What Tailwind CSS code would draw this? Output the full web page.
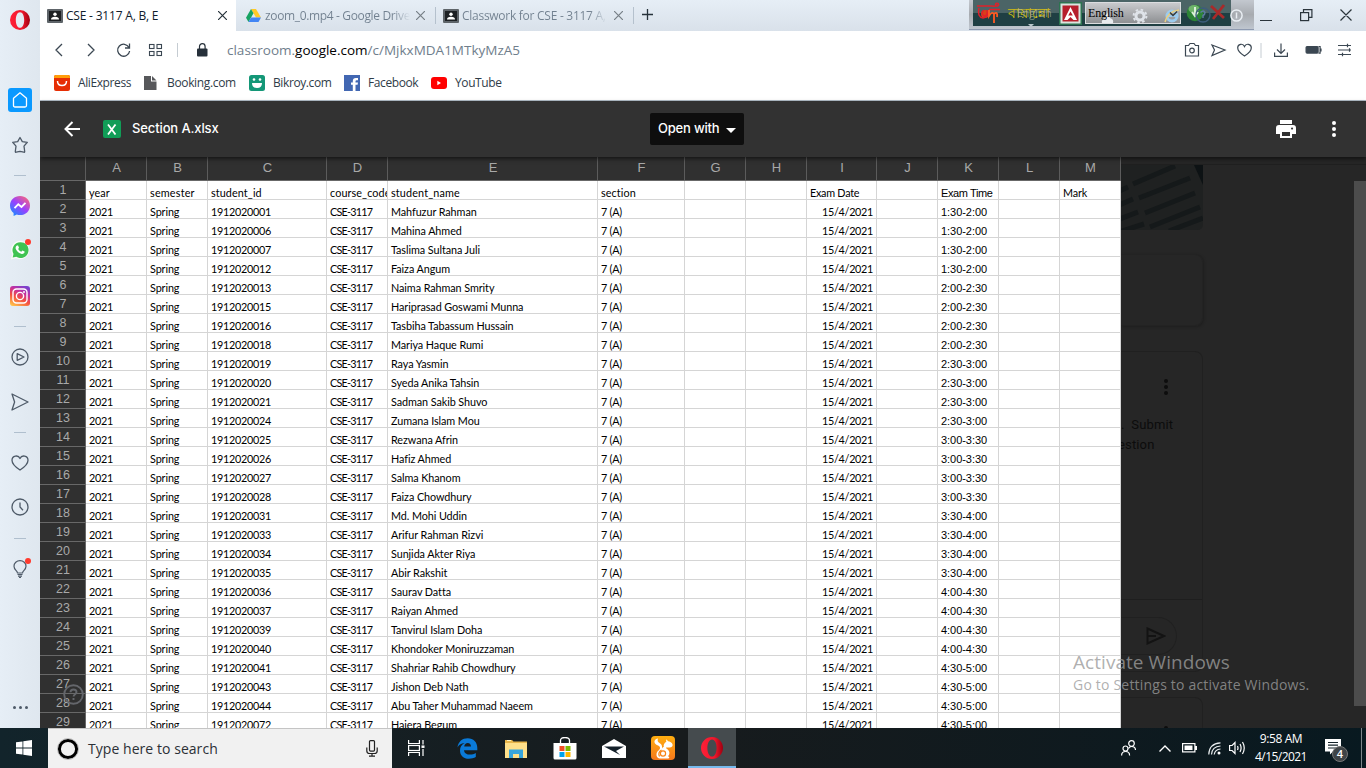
<!DOCTYPE html>
<html lang="en">
<head>
<meta charset="utf-8">
<title>Section A.xlsx</title>
<script src="https://cdn.jsdelivr.net/npm/@tailwindcss/browser@4"></script>
</head>
<body class="w-[1366px] h-[768px] overflow-hidden flex flex-col font-['Open_Sans',sans-serif] bg-white relative">

<div class="flex h-[728px] w-full">
  <!-- Opera sidebar -->
  <aside class="w-10 h-full bg-gradient-to-r from-[#e6eef6] to-[#dfe7ef] flex flex-col items-center shrink-0">
    <svg class="mt-[10px]" width="20" height="20" viewBox="0 0 20 20"><defs><linearGradient id="op" x1="0" x2="1"><stop offset="0" stop-color="#ff2038"/><stop offset=".6" stop-color="#f0182c"/><stop offset="1" stop-color="#9e0010"/></linearGradient></defs><path fill="url(#op)" fill-rule="evenodd" d="M10 0a10 10 0 1 0 0 20 10 10 0 0 0 0-20zm0 2.200c2.600 0 4.200 3.500 4.200 7.800s-1.600 7.800-4.200 7.800S5.800 14.300 5.800 10 7.400 2.200 10 2.200z"/></svg>
    <div class="mt-[58px] size-6 rounded-[3px] bg-[#0a99ff] flex items-center justify-center"><svg width="16" height="18" viewBox="0 0 16 18" fill="none" stroke="#fff" stroke-width="1.300" stroke-linejoin="round"><path d="M1.500 7.200 8 1.800l6.500 5.400v7.300q0 1.500-1.500 1.500H3q-1.500 0-1.500-1.500z"/></svg></div>
    <svg class="mt-[24px]" width="18" height="18" viewBox="0 0 18 18" fill="none" stroke="#4e5a68" stroke-width="1.300" stroke-linejoin="round"><path d="M9 1.500l2.300 4.100 5 .7-3.300 3.800.7 5.400q0 .9-.9.700L9 15.300l-3.800.9q-.9.200-.9-.7l.7-5.400L1.700 6.300l5-.7z"/></svg>
    <div class="mt-[21px] w-3 h-px bg-[#b0bfce]"></div>
    <svg class="mt-[20px]" width="20" height="20" viewBox="0 0 20 20"><defs><linearGradient id="ms" x1="0.100" y1="1" x2=".9" y2="0"><stop offset="0" stop-color="#1090ff"/><stop offset=".5" stop-color="#9a40ff"/><stop offset="1" stop-color="#ff6a70"/></linearGradient></defs><path fill="url(#ms)" d="M10 0C4.400 0 0 4 0 9.500 0 13 1.700 15.500 3.600 17v3l3.200-1.400q1.500.5 3.200.5c5.600 0 10-4 10-9.600S15.600 0 10 0z"/><path fill="none" stroke="#fff" stroke-width="1.900" d="M4.500 12.200 8.300 8.200l3.200 2.700 4-4"/></svg>
    <div class="mt-[24px] h-[20px] relative"><svg width="20" height="20" viewBox="0 0 20 20"><path fill="#f7fbf8" d="M10.200.8a9.200 9.200 0 0 0-8 13.600L.8 19.600l5.300-1.300A9.200 9.200 0 1 0 10.200.8z"/><path fill="#3fc352" d="M10.200 2.200A7.900 7.900 0 0 0 3.500 14l-.8 3.600 3.600-.9a7.900 7.900 0 1 0 3.900-14.500z"/><path fill="#fff" d="M7 5.500l1.100.1.900 2.200-.8 1.100c.8 1.400 1.700 2.200 3.100 2.800l1.100-1.100 2.200 1-.1 1c-.6 1.300-2 1.600-3.300 1.200-2.800-.8-4.700-2.900-5.500-5-.4-1.300.3-2.800 1.300-3.300z"/></svg><i class="absolute -top-[1px] left-[15px] w-[6px] h-[6px] rounded-full bg-[#ff3a2d]"></i></div>
    <svg class="mt-[26px]" width="20" height="20" viewBox="0 0 20 20"><defs><linearGradient id="ig" x1="0.200" y1="1" x2=".7" y2="0"><stop offset="0" stop-color="#ffc04a"/><stop offset=".4" stop-color="#f4503f"/><stop offset=".7" stop-color="#c7309e"/><stop offset="1" stop-color="#7a42cd"/></linearGradient></defs><rect width="20" height="20" rx="3" fill="url(#ig)"/><g fill="none" stroke="#fff" stroke-width="1.400"><rect x="3" y="3" width="14" height="14" rx="3.500"/><circle cx="10" cy="10" r="3.600"/></g><circle cx="14" cy="6" r="1" fill="#fff"/></svg>
    <div class="mt-[20px] w-3 h-px bg-[#b0bfce]"></div>
    <svg class="mt-[21px] mr-px" width="18" height="18" viewBox="0 0 18 18" fill="none" stroke="#4e5a68" stroke-width="1.300" stroke-linejoin="round"><circle cx="9" cy="9" r="8"/><path d="M6.200 5.700 13 9l-6.800 3.300z"/></svg>
    <svg class="mt-[27px] mr-px" width="18" height="18" viewBox="0 0 18 18" fill="none" stroke="#4e5a68" stroke-width="1.300" stroke-linejoin="round"><path d="M1 1l16 8-16 8 2.600-8z"/></svg>
    <div class="mt-[21px] w-3 h-px bg-[#b0bfce]"></div>
    <svg class="mt-[22px] mr-px" width="18" height="16" viewBox="0 0 18 16" fill="none" stroke="#4e5a68" stroke-width="1.300" stroke-linejoin="round"><path d="M9 15C5 12.500 1 9.500 1 5.300 1 .5 7.300-.5 9 3.500 10.700-.5 17 .5 17 5.300c0 4.200-4 7.200-8 9.700z"/></svg>
    <svg class="mt-[27px] mr-px" width="18" height="18" viewBox="0 0 18 18" fill="none" stroke="#4e5a68" stroke-width="1.300"><circle cx="9" cy="9" r="8"/><path d="M9 4.500V9l3 3.200"/></svg>
    <div class="mt-[22px] w-3 h-px bg-[#b0bfce]"></div>
    <div class="mt-[21px] h-[20px] relative"><svg width="14" height="18" viewBox="0 0 14 18" fill="none" stroke="#4e5a68" stroke-width="1.200"><path d="M4.500 13C4.300 10.500 1 9.800 1 6.200a6 5.600 0 0 1 12 0c0 3.600-3.300 4.300-3.500 6.800zM4.500 14.500h5M5 16.200h4M6 17.600h2"/></svg><i class="absolute -top-[2px] left-[12px] w-[6px] h-[6px] rounded-full bg-[#ff3a2d]"></i></div>
    <div class="mt-[126px] flex gap-[3px]"><i class="w-[3px] h-[3px] rounded-full bg-[#4e5a68]"></i><i class="w-[3px] h-[3px] rounded-full bg-[#4e5a68]"></i><i class="w-[3px] h-[3px] rounded-full bg-[#4e5a68]"></i></div>
  </aside>

  <main class="flex-1 flex flex-col min-w-0 overflow-hidden">
    <!-- Tab strip -->
    <div class="h-[31px] shrink-0 flex bg-gradient-to-b from-[#e6eef6] to-[#d9e1ea] text-[12px] text-[#71808f] relative">
      <div class="w-[196px] bg-white flex items-center pl-[7px] pr-[9px] text-[#10202c]">
        <svg width="16" height="14" viewBox="0 0 16 14"><rect width="16" height="14" rx="1" fill="#5e6469"/><rect x="2" y="2" width="12" height="10" fill="#1d2023"/><circle cx="8" cy="5.300" r="1.700" fill="#fff"/><path fill="#fff" d="M4 10.500q0-2.800 4-2.800t4 2.800z"/></svg>
        <span class="ml-[3px] whitespace-nowrap tracking-[-0.2px]">CSE - 3117 A, B, E</span>
        <svg class="ml-auto" width="9" height="9" viewBox="0 0 9 9" stroke="#26323a" stroke-width="1.200"><path d="M0 0l9 9M9 0L0 9"/></svg>
      </div>
      <div class="w-[200px] flex items-center pl-[10px] pr-[10px] border-r border-[#b5c1cd] my-[7px]">
        <svg width="15" height="13" viewBox="0 0 15 13"><path fill="#ffc928" d="M5 0h5l5 8.500h-5z"/><path fill="#16a362" d="M5 0 0 8.800 2.500 13l5-8.700z"/><path fill="#4285f4" d="M5 8.500h10L12.500 13h-10z"/></svg>
        <span class="ml-[4px] w-[145px] overflow-hidden whitespace-nowrap tracking-[-0.35px] bg-linear-to-r from-[#71808f] from-88% to-transparent bg-clip-text text-transparent">zoom_0.mp4 - Google Drive</span>
        <svg class="ml-auto" width="9" height="9" viewBox="0 0 9 9" stroke="#777f86" stroke-width="1.200"><path d="M0 0l9 9M9 0L0 9"/></svg>
      </div>
      <div class="w-[198px] flex items-center pl-[7px] pr-[10px] border-r border-[#b5c1cd] my-[7px]">
        <svg width="16" height="14" viewBox="0 0 16 14"><rect width="16" height="14" rx="1" fill="#5e6469"/><rect x="2" y="2" width="12" height="10" fill="#1d2023"/><circle cx="8" cy="5.300" r="1.700" fill="#fff"/><path fill="#fff" d="M4 10.500q0-2.800 4-2.800t4 2.800z"/></svg>
        <span class="ml-[3px] w-[145px] overflow-hidden whitespace-nowrap tracking-[-0.27px] bg-linear-to-r from-[#71808f] from-88% to-transparent bg-clip-text text-transparent">Classwork for CSE - 3117 A,</span>
        <svg class="ml-auto" width="9" height="9" viewBox="0 0 9 9" stroke="#777f86" stroke-width="1.200"><path d="M0 0l9 9M9 0L0 9"/></svg>
      </div>
      <svg class="mt-[9px] ml-[8px]" width="11" height="11" viewBox="0 0 11 11" stroke="#26323a" stroke-width="1.300"><path d="M0 5.500h11M5.500 0v11"/></svg>

      <!-- Bijoy keyboard bar over the tab strip -->
      <div class="absolute left-[929px] top-0 w-[285px] h-[30px] bg-gradient-to-b from-[#c3c8cf] via-[#a7abb0] to-[#bfc6cf] border-b border-[#8e9ab0]"></div>
      <div class="absolute left-[933px] top-0 w-[258px] h-[26px] bg-gradient-to-b from-[#4b6466] from-50% to-[#1f3f43] to-50% flex items-center">
        <svg class="ml-[3px] shrink-0" width="28" height="24" viewBox="0 0 28 24" fill="none"><circle cx="9" cy="13" r="4" fill="#d8401a"/><g stroke="#e0202a" stroke-width="1.500"><path d="M1 5h15M3 7q-2 9 4 10 5-1 5-6M8 9q-4 3 0 6 4 0 3-6M16 5q4 1 7-1M21 2.200a1.500 1.500 0 1 0 .1 0"/><path d="M13 8.500h11" stroke-width="1.500"/></g><path d="M13 9v6q3-5 5-2v9M18 13q4-3 3 3" stroke="#ff5a22" stroke-width="1.800"/></svg>
        <span class="ml-[4px] w-[43px] text-[14px] leading-[22px] text-[#d2bd10] font-medium whitespace-nowrap">বায়ান্নো</span>
        <svg class="ml-[8px] shrink-0" width="23" height="23" viewBox="0 0 23 23"><rect width="23" height="23" fill="#2d7350"/><rect x="1.500" y="1.500" width="20" height="20" fill="#d9e4df"/><rect x="3.500" y="3.500" width="16" height="16" fill="#b61e2c"/><path fill="#fff" d="M11.500 5l6.500 13h-3.500l-3-3-3 3H5zM11.500 9.500l-2.300 4h4.600z"/></svg>
        <div class="ml-[3px] w-[96px] h-[22px] shrink-0 bg-gradient-to-b from-[#c9cacd] to-[#8e9093] border border-[#dcdde0] flex items-start relative">
          <svg class="absolute left-[15px] top-[9px]" width="13" height="12" viewBox="0 0 13 12"><path fill="#e9ebee" d="M6 0l3 6q4 1 3 5H1q-1-3 3-5z"/></svg>
          <span class="ml-[2px] relative font-['Liberation_Serif',serif] text-[12px] leading-[20px] tracking-[-0.15px] text-black">English</span>
          <svg class="absolute left-[46px] top-[5px]" width="16" height="16" viewBox="0 0 16 16" fill="none" stroke="#dfe3e9"><circle cx="8" cy="8" r="4" stroke-width="3"/><circle cx="8" cy="8" r="6.400" stroke-width="2" stroke-dasharray="2.500 2.500"/></svg>
          <svg class="absolute left-[78px] top-[5px]" width="16" height="16" viewBox="0 0 16 16" fill="none"><circle cx="8" cy="8" r="5" stroke="#9ccbee" stroke-width="3"/><path d="M4 8h8" stroke="#9ccbee" stroke-width="2"/><path d="M1 14Q4 3 15 2" stroke="#e9cf80" stroke-width="1.500"/><path d="M6 4.500l3 3 4-4" stroke="#30373d" stroke-width="1.300"/></svg>
        </div>
        <svg class="ml-[5px] shrink-0" width="42" height="22" viewBox="0 0 42 22" fill="none"><circle cx="9" cy="11" r="8.300" fill="#2c8436"/><ellipse cx="8" cy="7" rx="5.500" ry="4" fill="#9bd48f" fill-opacity=".6"/><path d="M9 5v8M6 10l3 4 3-4" stroke="#d9f0d8" stroke-width="2"/><circle cx="17" cy="13" r="7" stroke="#3d5d7c" stroke-width="1.400"/><path d="M14.500 10.500q3-3 4.500 0 0 2-2 3v2.500" stroke="#5c7ca0" stroke-width="1.500"/><path d="M25 4l13 12M38 3 27 17" stroke="#a82a2a" stroke-width="2.800"/></svg>
      </div>
      <span class="absolute left-[977px] top-[6px] text-[10.5px] leading-[15px] text-[#aebba0]/70">English</span>
      <i class="absolute left-[988px] top-[24px] border-x-[3px] border-t-[3px] border-x-transparent border-t-[#b8c6cb]"></i>
      <svg class="absolute left-[1190px] top-[9px]" width="13" height="13" viewBox="0 0 13 13" fill="none" stroke="#e9eef3" stroke-width="1.500"><circle cx="6.500" cy="6.500" r="5.600"/><path d="M6.500 3.500v6"/></svg>
      <!-- window controls -->
      <svg class="absolute left-[1220px] top-[9px]" width="92" height="13" viewBox="0 0 92 13" fill="none" stroke="#2b353c" stroke-width="1.200"><path d="M0 11.500h12M80.500.5l11 11M91.500.5l-11 11M43.500 3.500V.6h8.400v7.800h-3"/><rect x="40.600" y="3.600" width="8" height="8"/></svg>
    </div>

    <!-- Address bar -->
    <div class="h-[38px] shrink-0 flex items-center bg-white">
      <svg class="ml-[14px]" width="135" height="16" viewBox="0 0 135 16" fill="none" stroke="#3b4752" stroke-width="1.300"><path d="M8 2 2 8l6 6M34 2l6 6-6 6M75 5.500A6 6 0 1 0 75.600 9M75.500 1.500v4.500h-4.500"/><g stroke-width="1.100"><rect x="95.500" y="2.500" width="4.500" height="4"/><rect x="103" y="2.500" width="4.500" height="4"/><rect x="95.500" y="9.500" width="4.500" height="4"/><rect x="103" y="9.500" width="4.500" height="4"/></g><path d="M123.500 1v14" stroke="#c5ccd2" stroke-width="1"/></svg>
      <svg class="ml-[8px]" width="11" height="14" viewBox="0 0 11 14"><rect y="5.500" width="10.500" height="8" rx="1" fill="#26303a"/><path d="M2.500 6V3.500a2.800 2.800 0 0 1 5.600 0V6" fill="none" stroke="#26303a" stroke-width="1.200"/></svg>
      <span class="ml-[19px] mt-px text-[13.5px] text-[#6f7e8c] whitespace-nowrap">classroom.<span class="text-black">google.com</span>/c/MjkxMDA1MTkyMzA5</span>
      <svg class="ml-auto mr-[14px]" width="168" height="16" viewBox="0 0 168 16" fill="none" stroke="#3b4752" stroke-width="1.200"><path d="M1.500 3.500h3l1.500-2h4l1.500 2h3v10.500h-13z"/><circle cx="8" cy="8.500" r="2.300"/><path d="M28 3l13 5-13 5.500L30.500 8zM60.500 14q-6.800-4-6.800-8.200c0-4 5.300-4.800 6.800-1.400 1.500-3.400 6.800-2.600 6.800 1.400 0 4.200-6.800 8.200-6.800 8.200z"/><path d="M77 1v15" stroke="#c5ccd2" stroke-width="1"/><path d="M97 1.500V11M93 7.500l4 4 4-4M90.600 10.500v3.900h12.800v-3.900"/><rect x="122.100" y="4.600" width="12" height="6.500" rx="1" fill="#3b4752"/><path d="M134.500 4.500h1.600v6.600h-1.600M137 6.500v3"/><path d="M154 3.500h13M154 8h13M154 12.500h13M163.500 1.800v3.400M165.500 6.300v3.400M158.500 10.800v3.400"/></svg>
    </div>

    <!-- Bookmarks -->
    <div class="h-[32px] pb-[3px] shrink-0 flex items-center bg-white border-b border-[#b4bfca] text-[12px] text-[#2f3c48] tracking-[-0.4px]">
      <svg class="ml-[14px]" width="16" height="16" viewBox="0 0 16 16"><rect width="16" height="16" rx="2" fill="#e62e04"/><path d="M0 3V2a2 2 0 0 1 2-2h12a2 2 0 0 1 2 2v1z" fill="#ff9d0a"/><path d="M3.500 6q0 4.500 4.500 4.500T12.500 6" fill="none" stroke="#fff" stroke-width="1.500"/></svg>
      <span class="ml-[8px] w-[66px]">AliExpress</span>
      <svg width="13" height="14" viewBox="0 0 13 14"><path fill="#57585b" d="M0 0h7v5.500h5.500V14H0z"/><path fill="#57585b" d="M8 0l4.500 4.500H8z"/></svg>
      <span class="ml-[10px] w-[82px] tracking-[-0.35px]">Booking.com</span>
      <svg width="16" height="16" viewBox="0 0 16 16"><rect width="16" height="16" rx="2.500" fill="#149777"/><path d="M3 8h10q0 5-5 5T3 8z" fill="#fff"/><circle cx="5" cy="4.500" r="1.300" fill="#fff"/><circle cx="11" cy="4.500" r="1.300" fill="#fff"/></svg>
      <span class="ml-[8px] w-[71px]">Bikroy.com</span>
      <svg width="16" height="16" viewBox="0 0 16 16"><rect width="16" height="16" fill="#4267b2"/><path fill="#fff" d="M8.800 16V9.800H7V7.500h1.800V6q0-3 3-3H14v2.300h-1.300q-1.200 0-1.200 1.200v1H14l-.4 2.300h-2.100V16z"/></svg>
      <span class="ml-[8px] w-[63px]">Facebook</span>
      <svg width="16" height="12" viewBox="0 0 16 12"><rect width="16" height="12" rx="3" fill="#f00"/><path d="M6.300 3.800 10 6l-3.700 2.200z" fill="#fff"/></svg>
      <span class="ml-[8px]">YouTube</span>
    </div>

    <!-- Viewer header -->
    <div class="h-[56px] shrink-0 bg-[#323232] flex items-center text-white font-['Inter',sans-serif] font-medium text-[13px] z-10 shadow-[0_2px_4px_rgba(0,0,0,.55)]">
      <svg class="ml-[24px]" width="16" height="16" viewBox="0 0 16 16" fill="none" stroke="#fff" stroke-width="2"><path d="M16 8H1.500M8.500 1l-7 7 7 7"/></svg>
      <div class="ml-[23px] size-[18px] rounded-[2px] bg-[#119d57] flex items-center justify-center"><svg width="10" height="11" viewBox="0 0 10 11" stroke="#fff" stroke-width="1.800"><path d="M1 .5l7.500 10M8.500.5 1 10.500"/></svg></div>
      <span class="ml-[11px] w-[518px] tracking-[-0.12px]">Section A.xlsx</span>
      <div class="w-[94px] h-8 rounded-[2px] bg-[#0e0e0e] flex items-center pl-[8px]"><span class="tracking-[-0.2px] whitespace-nowrap">Open with</span><i class="ml-auto mr-[8px] mt-[2px] border-x-[5px] border-t-[5px] border-x-transparent border-t-white"></i></div>
      <svg class="ml-auto" width="20" height="18" viewBox="0 0 20 18"><path fill="#fff" fill-rule="evenodd" d="M4 0h12v4H4zM3 5h14a3 3 0 0 1 3 3v6h-4v4H4v-4H0V8a3 3 0 0 1 3-3zm3 7v4h8v-4zM16 7.500a1 1 0 1 0 .1 0z"/></svg>
      <svg class="ml-[36px] mr-[30px]" width="4" height="16" viewBox="0 0 4 16" fill="#fff"><circle cx="2" cy="2" r="2"/><circle cx="2" cy="8" r="2"/><circle cx="2" cy="14" r="2"/></svg>
    </div>

    <div class="flex h-[571px] shrink-0 overflow-hidden bg-[#262626]">
      <!-- Sheet -->
      <div class="w-[1081px] shrink-0">
        <div id="head" class="h-6 grid grid-cols-[46px_61px_61px_119px_61px_210px_87px_61px_61px_70px_61px_61px_61px_61px] bg-[#303030] border-b border-[#686868] font-['Liberation_Sans',sans-serif] text-[13px] leading-[22px] text-[#a9a9a9] text-center"></div>
        <div id="rows" class="font-['Lato',sans-serif] text-[10.8px] text-black"></div>
      </div>
      <!-- Dimmed classroom page behind the viewer -->
      <div class="flex-1 relative flex flex-col overflow-hidden">
        <div class="h-[8px] shrink-0 border-b border-[#202020]"></div>
        <svg class="shrink-0" width="82" height="65" viewBox="0 0 82 65"><path fill="#1f2121" d="M0 0h82v59q0 6-6 6H0z"/><path fill="#0d1214" d="M73 0h9v20z"/><g stroke="#15191a" stroke-width="5"><path d="M12 19 54 1M18 33 69 13M24 48 74 28M29 62 79 42M48 66 82 53M-4 27 7 22M-4 41 12 34M-4 55 17 47M-2 67 23 59"/></g></svg>
        <div class="mt-[24px] w-[82px] h-[72px] shrink-0 rounded-r-lg border-r border-y border-[#232323] shadow-[1px_1px_3px_rgba(0,0,0,.22)]"></div>
        <div class="mt-[25px] w-[82px] h-[321px] shrink-0 rounded-r-lg border-r border-y border-[#202020] flex flex-col font-['Roboto',sans-serif] text-[13px] leading-[20px] text-[#0c0c0c] tracking-[0.15px]">
          <svg class="mt-[27px] ml-[43px] shrink-0" width="4" height="16" viewBox="0 0 4 16" fill="#0d0d0d"><circle cx="2" cy="2" r="2"/><circle cx="2" cy="8" r="2"/><circle cx="2" cy="14" r="2"/></svg>
          <div class="mt-[20px] whitespace-pre">.  Submit</div>
          <div class="-ml-[3px]">estion</div>
          <div class="mt-[144px] border-t border-[#1e1e1e]"></div>
          <div class="mt-[17px] w-[56px] h-[38px] rounded-r-full border-y border-r border-[#202020] flex items-center pl-[25px]"><svg width="20" height="18" viewBox="0 0 20 18" fill="none" stroke="#131313" stroke-width="2"><path d="M1.500 1.500 18 9 1.500 16.500V1.500zM2 9h8"/></svg></div>
        </div>
        <div class="mt-[25px] w-[82px] h-[60px] shrink-0 rounded-tr-lg border-r border-t border-[#202020]"><i class="block mt-[28px] ml-[43px] w-1 h-1 rounded-full bg-[#0d0d0d]"></i></div>
        <div class="absolute right-0 top-[24px] w-3 h-[525px] bg-[#4c4c4c]"></div>
      </div>
    </div>
  </main>
</div>

<!-- help button and activation watermark overlay the sheet -->
<svg class="absolute left-[63px] top-[684px]" width="21" height="21" viewBox="0 0 21 21" fill="none" stroke="#64666b" stroke-width="1.900"><circle cx="10.500" cy="10.500" r="9.300"/><path d="M7.500 8.300q0-2.800 3-2.800t3 2.600c0 2-2.900 2.200-2.900 4.400M10.500 14v2"/></svg>
<div class="absolute left-[1073px] top-[650px] text-[#9b9b9b]/80 whitespace-nowrap">
  <div class="text-[19px] leading-[25px] tracking-[0.05px]">Activate Windows</div>
  <div class="text-[14px] leading-[20px] tracking-[0.2px]">Go to Settings to activate Windows.</div>
</div>

<!-- Taskbar -->
<footer class="h-10 shrink-0 flex items-center bg-gradient-to-r from-[#12242b] via-[#171b1d] to-[#081920] text-white">
  <svg class="ml-4" width="16" height="16" viewBox="0 0 16 16" fill="#fff"><path d="M0 2.300 6.500 1.400V7.600H0zM7.300 1.300 16 0v7.600H7.300zM0 8.400h6.500v6.200L0 13.700zM7.300 8.400H16V16l-8.700-1.300z"/></svg>
  <div class="ml-4 w-[344px] h-10 bg-[#f1f1f1] border-t border-[#c4c4c4] flex items-center pl-[9px] pr-[14px] text-[14px] text-[#2c3036]">
    <svg width="22" height="22" viewBox="0 0 22 22" fill="none"><circle cx="11" cy="11" r="8.600" stroke="#000" stroke-width="3"/><circle cx="11" cy="11" r="10.500" stroke="#999" stroke-width=".6"/></svg>
    <span class="ml-[9px] whitespace-nowrap tracking-[0.05px]">Type here to search</span>
    <svg class="ml-auto" width="12" height="17" viewBox="0 0 12 17" fill="none" stroke="#222" stroke-width="1.200"><rect x="3.500" y=".6" width="5" height="10.500" rx="1"/><path d="M.8 7.500v3.200q0 2.800 2.800 2.800h4.800q2.800 0 2.800-2.800V7.500M6 13.500V16M3 16.200h6"/></svg>
  </div>
  <svg class="ml-[16px]" width="17" height="16" viewBox="0 0 17 16" fill="none" stroke="#fff" stroke-width="1.200"><path d="M.6 0v3.500h10.800V0M.6 16v-3.500h10.800V16M15 0v4.500M15 9v7"/><rect x=".6" y="5.500" width="10.800" height="5"/><path d="M13.500 6.700h3" stroke-width="2.500"/></svg>
  <svg class="ml-[32px]" width="21" height="21" viewBox="0 0 21 21"><path fill="#0a7ad8" d="M.5 9.500C1.300 3.500 5.400.3 10.700.3c5.800 0 9.600 4 9.600 9.500v2.400H7c.3 3 2.800 4.400 6 4.400 2.200 0 4.100-.6 5.800-1.700v4.200c-1.900 1.100-4.300 1.600-6.800 1.600-5.600 0-9-3.300-9-8.300 0-3.200 1.700-5.900 4.700-7.300-4 .3-6 2.300-7.200 4.400zM7.200 8.600H14c-.1-2.200-1.200-3.600-3.300-3.600-1.900 0-3.200 1.400-3.500 3.600z"/></svg>
  <svg class="ml-[27px]" width="22" height="19" viewBox="0 0 22 19"><path fill="#e8b54a" d="M0 1h7l1.500 1.500H22V19H0z"/><path fill="#ffe08a" d="M0 4h22v15H0z"/><path fill="#fff3c0" d="M2 1h4v1H2z"/><path fill="#37a5dc" d="M4 10.500h14V19h-4v-4H8v4H4z"/></svg>
  <svg class="ml-[26px]" width="24" height="23" viewBox="0 0 24 23"><path d="M7.500 7V3.500q0-3 4.500-3t4.500 3V7" fill="none" stroke="#fff" stroke-width="1.300"/><path fill="#fff" d="M.5 6h23v15q0 1.500-1.500 1.500H2Q.5 22.500.5 21z"/><path fill="#f04e24" d="M6.500 9h5v5h-5z"/><path fill="#7fb900" d="M12.500 9h5v5h-5z"/><path fill="#00a3ee" d="M6.500 15h5v5h-5z"/><path fill="#ffb800" d="M12.500 15h5v5h-5z"/></svg>
  <svg class="ml-[25px]" width="24" height="19" viewBox="0 0 24 19"><path fill="#fff" d="M0 7 12 0l12 7v12H0z"/><path fill="#14202a" d="M2 7.500h20L14 12l4 4z"/></svg>
  <svg class="ml-[25px]" width="24" height="24" viewBox="0 0 24 24"><defs><linearGradient id="uc" x2="0" y2="1"><stop stop-color="#ffae10"/><stop offset="1" stop-color="#f6781c"/></linearGradient></defs><rect width="24" height="24" rx="4" fill="url(#uc)"/><path fill="#fff" d="M7 2.500C3.500 3 2.500 6 4.500 8c1.500 1.500 4 1.500 4.500 3.500C9.500 14 6 14.500 5.500 18c-.3 2.500 1 4 3 4.500h8.500c1.800 0 1.600-2 0-2.300 2-2 1.800-4.500.2-6.200-1-1-2.200-1.400-2.200-2.400h3.500c2.500 0 3.500-1.800 3-3.300-.6-1.800-2.500-2.800-4.500-3-.3-1-1-1.500-2-1.800l.3 2.300c-2 1-3 3-2.500 5-1 .5-1.500 1-1.800 1.700C11.500 9 10 8 8.500 7 7 6 6 4.500 7 2.500z"/><g fill="none" stroke="#f98417" stroke-width="1.200"><circle cx="12" cy="17.500" r="2.600"/><path d="M8.500 20.500q-2-4 2-6.500"/></g></svg>
  <div class="ml-[13px] w-12 h-10 bg-[#454b4e] border-b-2 border-[#76b9ed] flex items-center justify-center pt-[1px]"><svg width="22" height="22" viewBox="0 0 20 20"><path fill="url(#op)" fill-rule="evenodd" d="M10 0a10 10 0 1 0 0 20 10 10 0 0 0 0-20zm0 2.200c2.600 0 4.200 3.500 4.200 7.800s-1.600 7.800-4.200 7.800S5.800 14.300 5.800 10 7.400 2.200 10 2.200z"/></svg></div>
  <svg class="ml-auto" width="15" height="16" viewBox="0 0 15 16" fill="none" stroke="#fff" stroke-width="1.200"><circle cx="10.500" cy="3.500" r="2.800"/><circle cx="4.500" cy="8.500" r="2.500"/><path d="M.6 15.500q0-4 4-4t4 4M7.500 8.500q1-2 3-2 4 0 4 3.500"/></svg>
  <svg class="ml-[23px]" width="12" height="7" viewBox="0 0 12 7" fill="none" stroke="#fff" stroke-width="1.400"><path d="M.5 6.500 6 1l5.500 5.500"/></svg>
  <svg class="ml-[11px]" width="15" height="10" viewBox="0 0 15 10"><rect x=".6" y=".6" width="12.300" height="8.300" fill="none" stroke="#fff" stroke-width="1.200"/><path fill="#fff" d="M2.500 2.500h8v4.500h-8zM13 3h2v4h-2z"/></svg>
  <svg class="ml-[11px]" width="13" height="13" viewBox="0 0 13 13" fill="none" stroke="#e8ecee" stroke-width="1.200"><path d="M.8 12.500Q1 1.500 12.500.8M3.500 12.500Q4 4.500 12.500 4M6.200 12.500Q7 7.500 12.500 7"/><circle cx="11" cy="11" r="1.500" fill="#fff" stroke="none"/></svg>
  <svg class="ml-[8px]" width="17" height="14" viewBox="0 0 17 14" fill="none" stroke="#fff" stroke-width="1.200"><path d="M.6 4.500h2.500L6 1.500v11l-2.900-3H.6zM8.500 5q1 2 0 4M11 3q2.200 4 0 8M13.500 1q3.500 6 0 12"/></svg>
  <div class="ml-[8px] w-[54px] text-[12px] leading-[18px] tracking-[-0.55px] text-center whitespace-nowrap flex flex-col items-center"><span class="tracking-[-0.4px]">9:58 AM</span><span>4/15/2021</span></div>
  <div class="ml-[17px] relative w-[24px] h-[28px]"><svg width="16" height="17" viewBox="0 0 16 17" class="mt-[5px]"><path fill="#fff" d="M0 0h16v12.500H8L5 15.500V12.500H0z"/><path stroke="#16242b" stroke-width="1.200" d="M3 3.500h10M3 6.200h10M3 9h10"/></svg><span class="absolute left-[7px] top-[12px] size-4 rounded-full bg-[#3f4447] border border-[#777] text-[11px] leading-[14px] font-semibold text-center">4</span></div>
  <i class="ml-[12px] w-px h-10 bg-[#7b8589]"></i><i class="w-[4px]"></i>
</footer>

<script>
const grid = "h-[19px] grid grid-rows-[19px] grid-cols-[46px_61px_61px_119px_61px_210px_87px_61px_61px_70px_61px_61px_61px_61px]";
document.getElementById("head").innerHTML = ["", ..."ABCDEFGHIJKLM"].map(c => `<div class="border-r border-[#5c5c5c] pl-px">${c}</div>`).join("");
const students = [["01","Mahfuzur Rahman"],["06","Mahina Ahmed"],["07","Taslima Sultana Juli"],["12","Faiza Angum"],["13","Naima Rahman Smrity"],["15","Hariprasad Goswami Munna"],["16","Tasbiha Tabassum Hussain"],["18","Mariya Haque Rumi"],["19","Raya Yasmin"],["20","Syeda Anika Tahsin"],["21","Sadman Sakib Shuvo"],["24","Zumana Islam Mou"],["25","Rezwana Afrin"],["26","Hafiz Ahmed"],["27","Salma Khanom"],["28","Faiza Chowdhury"],["31","Md. Mohi Uddin"],["33","Arifur Rahman Rizvi"],["34","Sunjida Akter Riya"],["35","Abir Rakshit"],["36","Saurav Datta"],["37","Raiyan Ahmed"],["39","Tanvirul Islam Doha"],["40","Khondoker Moniruzzaman"],["41","Shahriar Rahib Chowdhury"],["43","Jishon Deb Nath"],["44","Abu Taher Muhammad Naeem"],["72","Hajera Begum"]];
const slots = ["1:30-2:00","2:00-2:30","2:30-3:00","3:00-3:30","3:30-4:00","4:00-4:30","4:30-5:00"];
const data = [["year","semester","student_id","course_code","student_name","section","","","Exam Date","","Exam Time","","Mark"]]
  .concat(students.map(([id, name], i) => ["2021","Spring","19120200"+id,"CSE-3117",name,"7 (A)","","","15/4/2021","",slots[Math.floor(i/4)],"",""]));
const cell = "border-r border-b border-[#d5d5d5] bg-white pl-[3px] whitespace-nowrap overflow-hidden ";
const calibri = "pt-[4px] leading-[15px] ";
const arial = "pt-[4px] leading-[17px] font-['Liberation_Sans',sans-serif] text-[11px] ";
const styles = ["tracking-[-0.25px]","tracking-[-0.1px]","tracking-[-0.25px]","tracking-[-0.75px]","tracking-[-0.07px]","tracking-[-0.25px]","","","tracking-[-0.3px]","","tracking-[-0.05px]","",""];
const headStyles = ["tracking-[0.1px]","tracking-[0.2px]","tracking-[0.1px]","tracking-[0.1px]","tracking-[0.15px]","tracking-[0.1px]","","","tracking-[-0.25px]","","tracking-[-0.4px]","","tracking-[-0.1px]"];
document.getElementById("rows").innerHTML = data.map((r, n) => `<div class="${grid}"><div class="bg-[#303030] border-r border-b border-[#686868] font-['Liberation_Sans',sans-serif] text-[12.5px] leading-[18px] text-[#a9a9a9] text-center pl-px">${n+1}</div>` +
  r.map((t, i) => `<div class="${cell}${i === 10 ? arial : calibri}${n ? styles[i] : headStyles[i]} ${i === 8 && n ? "text-right pr-[3px]" : ""}">${t}</div>`).join("") + `</div>`).join("");
</script>
</body>
</html>
